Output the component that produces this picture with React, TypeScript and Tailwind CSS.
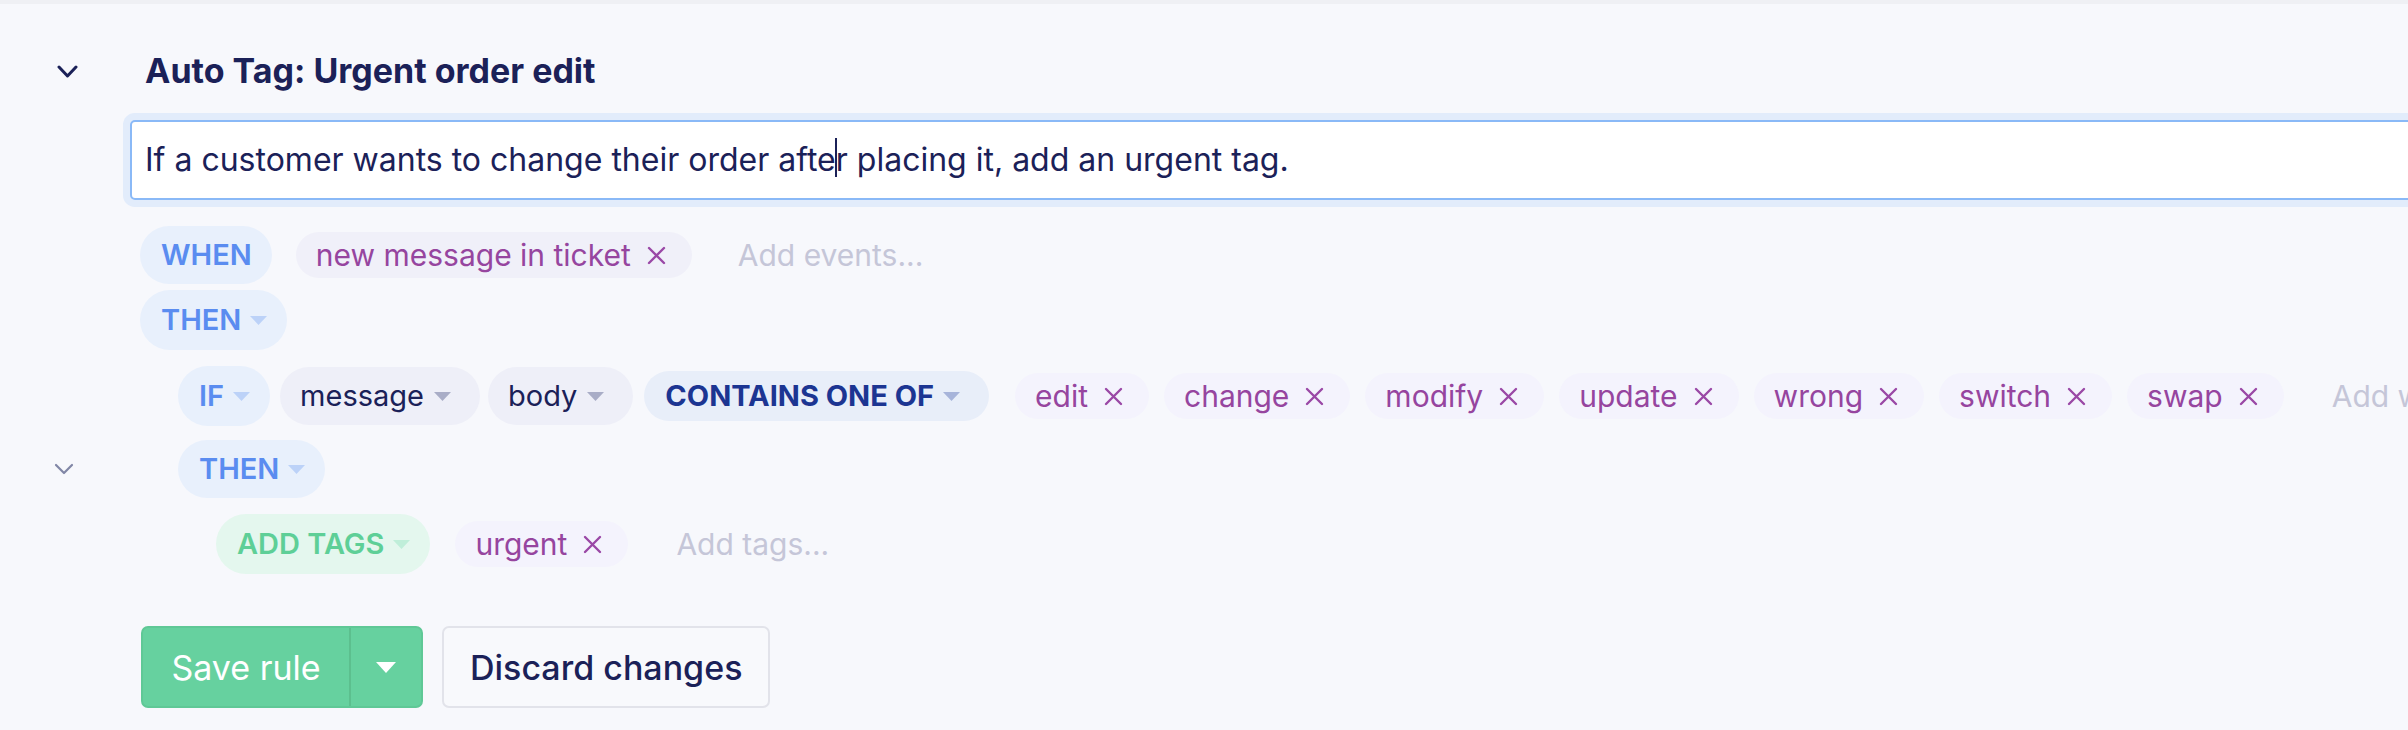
import React from 'react';

// small dropdown caret used inside the pills
const Caret = ({ color, w = 17, h = 9 }: { color: string; w?: number; h?: number }) => (
  <svg width={w} height={h} viewBox={`0 0 ${w} ${h}`} className="shrink-0">
    <polygon points={`0,0 ${w},0 ${w / 2},${h}`} fill={color} />
  </svg>
);

const Cross = () => (
  <svg width="19" height="19" viewBox="0 0 19 19" className="shrink-0">
    <path d="M2 2 L17 17 M17 2 L2 17" stroke="#9a48a6" strokeWidth="2.4" strokeLinecap="round" />
  </svg>
);

const Tag = ({ label, soft = false }: { label: string; soft?: boolean }) => (
  <span
    className={`inline-flex items-center h-[46px] rounded-full pl-[20px] pr-[26px] gap-[16px] text-[30px] text-[#96459f] whitespace-nowrap ${
      soft ? 'bg-[#f0f0f9]' : 'bg-[#f4f3fd]'
    }`}
  >
    {label}
    <Cross />
  </span>
);

const Keyword = ({ label, caret = true, h = 'h-[60px]' }: { label: string; caret?: boolean; h?: string }) => (
  <span
    className={`inline-flex items-center ${h} rounded-full bg-[#e8f0fc] pl-[21px] pr-[20px] gap-[9px] text-[29px] font-semibold text-[#5a8cf0] whitespace-nowrap`}
  >
    {label}
    {caret && <Caret color="#bcd2f8" />}
  </span>
);

const Field = ({ label }: { label: string }) => (
  <span className="inline-flex items-center h-[58px] rounded-full bg-[#eeeff8] pl-[20px] pr-[29px] gap-[10px] text-[29px] text-[#1b2158] whitespace-nowrap">
    {label}
    <Caret color="#a9adc7" />
  </span>
);

const Placeholder = ({ text, className }: { text: string; className: string }) => (
  <span className={`text-[30px] text-[#c5c6d8] whitespace-nowrap ${className}`}>{text}</span>
);

const words = ['edit', 'change', 'modify', 'update', 'wrong', 'switch', 'swap'];

export default function App() {
  return (
    <div className="min-h-[730px] w-full overflow-hidden bg-[#f7f8fc] font-[Inter,sans-serif]">
      <div className="h-[4px] bg-[#eff0f4]" />

      {/* header */}
      <div className="flex items-center mt-[47px]">
        <div className="w-[130px] shrink-0">
          <svg width="21" height="13" viewBox="0 0 21 13" className="ml-[57px]">
            <polyline points="2,2 10.5,11 19,2" fill="none" stroke="#1b2158" strokeWidth="3" strokeLinecap="round" strokeLinejoin="round" />
          </svg>
        </div>
        <h2 className="ml-[15px] text-[34px] leading-[40px] font-bold text-[#1b2158] whitespace-nowrap">
          Auto Tag: Urgent order edit
        </h2>
      </div>

      {/* description */}
      <div className="mt-[29px] ml-[130px] w-[2400px] h-[80px] flex items-center bg-white border-2 border-[#8ab9f7] rounded-[5px] ring-[7px] ring-[#e2ecfb] pl-[13px] text-[32px] text-[#1b2158] whitespace-nowrap">
        <span>
          If a customer wants to change their order afte
          <span className="inline-block w-[2px] h-[39px] -mx-[1px] bg-[#1b2158] align-[-6px]" />
          r placing it, add an urgent tag.
        </span>
      </div>

      {/* trigger */}
      <div className="flex items-center mt-[26px] pl-[140px]">
        <Keyword label="WHEN" caret={false} h="h-[58px]" />
        <span className="ml-[24px]">
          <Tag label="new message in ticket" soft />
        </span>
        <Placeholder text="Add events..." className="ml-[46px]" />
      </div>
      <div className="flex items-center mt-[6px] pl-[140px]">
        <Keyword label="THEN" />
      </div>

      {/* condition */}
      <div className="flex items-center mt-[16px] pl-[178px]">
        <Keyword label="IF" />
        <span className="ml-[10px]">
          <Field label="message" />
        </span>
        <span className="ml-[8px]">
          <Field label="body" />
        </span>
        <span className="ml-[11px] inline-flex items-center h-[50px] rounded-full bg-[#e8eef9] pl-[21px] pr-[29px] gap-[9px] text-[29px] font-bold text-[#1c3592] whitespace-nowrap">
          CONTAINS ONE OF
          <Caret color="#a7b4da" />
        </span>
        <div className="ml-[26px] flex items-center gap-[15px]">
          {words.map((w) => (
            <Tag key={w} label={w} />
          ))}
        </div>
        <Placeholder text="Add words..." className="ml-[48px]" />
      </div>

      <div className="flex items-center mt-[14px]">
        <div className="w-[178px] shrink-0">
          <svg width="20" height="12" viewBox="0 0 20 12" className="ml-[54px]">
            <polyline points="2,2 10,10 18,2" fill="none" stroke="#8186a6" strokeWidth="2.2" strokeLinecap="round" strokeLinejoin="round" />
          </svg>
        </div>
        <Keyword label="THEN" h="h-[58px]" />
      </div>

      {/* action */}
      <div className="flex items-center mt-[16px] pl-[216px]">
        <span className="inline-flex items-center h-[60px] rounded-full bg-[#e4f7ee] pl-[21px] pr-[20px] gap-[9px] text-[29px] font-semibold text-[#5ecf97] whitespace-nowrap">
          ADD TAGS
          <Caret color="#bfeed9" />
        </span>
        <span className="ml-[25px]">
          <Tag label="urgent" />
        </span>
        <Placeholder text="Add tags..." className="ml-[48px]" />
      </div>

      {/* footer buttons */}
      <div className="flex items-center mt-[52px] pl-[141px] pb-[22px]">
        <div className="flex h-[82px] rounded-[7px] bg-[#66d19f] border-2 border-[#5fc896]">
          <button className="w-[206px] text-[34px] text-white whitespace-nowrap">Save rule</button>
          <div className="w-[72px] flex items-center justify-center border-l-2 border-[#5cbf8e]">
            <Caret color="#ffffff" w={20} h={11} />
          </div>
        </div>
        <button className="ml-[19px] h-[82px] px-[26px] rounded-[7px] border-2 border-[#e2e3ea] bg-[#f8f9fc] text-[34px] font-medium text-[#1b2158] whitespace-nowrap">
          Discard changes
        </button>
      </div>
    </div>
  );
}
